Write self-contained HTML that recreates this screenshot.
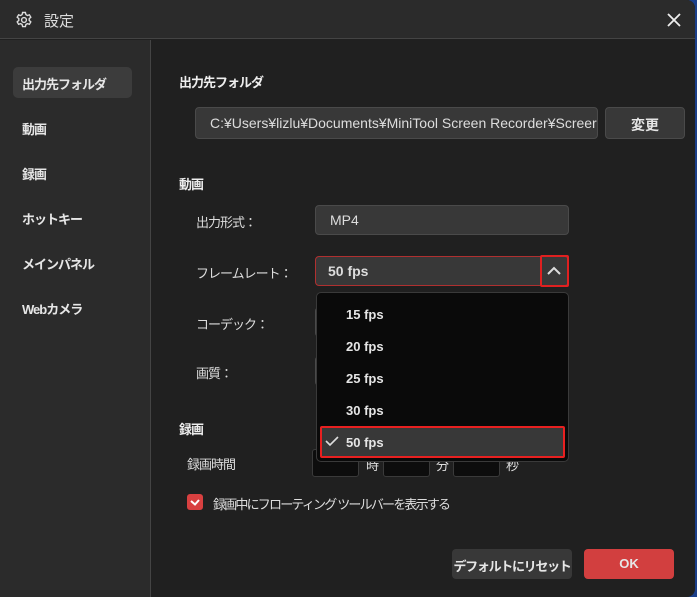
<!DOCTYPE html>
<html><head><meta charset="utf-8"><style>
*{margin:0;padding:0;box-sizing:border-box}
body{width:697px;height:597px;overflow:hidden;background:#1b3f8a;font-family:"Liberation Sans","Noto Sans CJK JP",sans-serif;color:#e6e6e6;position:relative}
.win{position:absolute;left:0;top:0;width:695px;height:597px;background:#202020;border-radius:0 8px 8px 0;overflow:hidden}
.title{position:absolute;left:0;top:0;width:100%;height:39px;background:#2b2b2b;border-bottom:1px solid #444}
.title .t{position:absolute;left:44px;top:10px;font-size:15px;color:#ddd}
.side{position:absolute;left:0;top:40px;width:151px;height:557px;background:#2b2b2b;border-right:1px solid #444}
.si{position:absolute;left:13px;width:119px;height:31px;font-size:13px;font-weight:bold;padding:7px 0 0 9px;color:#e6e6e6;letter-spacing:-1px}
.si.a{background:#3c3c3c;border-radius:5px}
.a1{position:absolute;font-size:13px;font-weight:bold;color:#eee;letter-spacing:-1px}
.l{position:absolute;font-size:13px;color:#ddd;letter-spacing:-1px;white-space:nowrap}
.box{position:absolute;background:#383838;border:1px solid #4a4a4a;border-radius:4px;font-size:14px;color:#ddd}
.btn{position:absolute;background:#383838;border-radius:4px;font-size:13px;font-weight:bold;color:#e6e6e6;text-align:center;white-space:nowrap}
.dd{position:absolute;left:316px;top:292px;width:253px;height:170px;background:#0a0a0a;border:1px solid #3a3a3a;border-radius:5px}
.op{position:absolute;left:29px;font-size:13px;font-weight:bold;color:#e6e6e6}
.tin{position:absolute;top:449px;height:28px;background:#0d0d0d;border:1px solid #3a3a3a;border-radius:3px}
</style></head><body>
<div class="win">
<div class="title">
<svg style="position:absolute;left:15px;top:11px" width="18" height="18" viewBox="0 0 18 18" fill="none" stroke="#ddd" stroke-width="1.4"><path d="M7.6 1.5h2.8l.5 2.1 1.5.9 2-.7 1.4 2.4-1.6 1.5v1.7l1.6 1.5-1.4 2.4-2-.7-1.5.9-.5 2.1H7.6l-.5-2.1-1.5-.9-2 .7-1.4-2.4 1.6-1.5V7.6L2.2 6.2l1.4-2.4 2 .7 1.5-.9z"/><circle cx="9" cy="9" r="2.4"/></svg>
<div class="t">設定</div>
<svg style="position:absolute;left:667px;top:13px" width="14" height="14" viewBox="0 0 14 14" stroke="#eee" stroke-width="1.8"><path d="M1 1L13 13M13 1L1 13"/></svg>
</div>
<div class="side">
<div class="si a" style="top:27px">出力先フォルダ</div>
<div class="si" style="top:72px">動画</div>
<div class="si" style="top:117px">録画</div>
<div class="si" style="top:162px">ホットキー</div>
<div class="si" style="top:207px">メインパネル</div>
<div class="si" style="top:252px">Webカメラ</div>
</div>
<div class="a1" style="left:179px;top:72px">出力先フォルダ</div>
<div class="box" style="left:195px;top:107px;width:403px;height:32px;padding:7px 0 0 14px;white-space:nowrap;overflow:hidden">C:¥Users¥lizlu¥Documents¥MiniTool Screen Recorder¥Screer</div>
<div class="btn" style="left:605px;top:107px;width:80px;height:32px;padding-top:7px;border:1px solid #4a4a4a;font-size:14px">変更</div>
<div class="a1" style="left:179px;top:174px">動画</div>
<div class="l" style="left:196px;top:212px">出力形式：</div>
<div class="box" style="left:315px;top:205px;width:254px;height:30px;padding:6px 0 0 14px">MP4</div>
<div class="l" style="left:196px;top:263px">フレームレート：</div>
<div class="box" style="left:315px;top:256px;width:254px;height:30px;padding:6px 0 0 12px;border-color:#b03030;font-weight:bold">50 fps</div>
<div style="position:absolute;left:540px;top:255px;width:29px;height:32px;border:2px solid #e02020;border-radius:2px"></div>
<svg style="position:absolute;left:546px;top:266px" width="16" height="10" viewBox="0 0 16 10" fill="none" stroke="#ddd" stroke-width="2"><path d="M2 8L8 2L14 8"/></svg>
<div class="l" style="left:196px;top:314px">コーデック：</div>
<div class="box" style="left:315px;top:307px;width:10px;height:30px"></div>
<div class="l" style="left:196px;top:363px">画質：</div>
<div class="box" style="left:315px;top:356px;width:10px;height:30px"></div>
<div class="a1" style="left:179px;top:419px">録画</div>
<div class="l" style="left:187px;top:454px">録画時間</div>
<div class="tin" style="left:312px;width:47px"></div>
<div class="l" style="left:366px;top:455px">時</div>
<div class="tin" style="left:383px;width:47px"></div>
<div class="l" style="left:436px;top:455px">分</div>
<div class="tin" style="left:453px;width:47px"></div>
<div class="l" style="left:506px;top:455px">秒</div>
<div class="dd">
<div class="op" style="top:14px">15 fps</div>
<div class="op" style="top:46px">20 fps</div>
<div class="op" style="top:78px">25 fps</div>
<div class="op" style="top:110px">30 fps</div>
<div style="position:absolute;left:3px;top:133px;width:245px;height:32px;background:#383838;border:2px solid #e82020;border-radius:2px"></div>
<svg style="position:absolute;left:8px;top:142px" width="14" height="12" viewBox="0 0 14 12" fill="none" stroke="#ddd" stroke-width="1.6"><path d="M1 6L5 10L13 2"/></svg>
<div class="op" style="top:142px">50 fps</div>
</div>
<div style="position:absolute;left:187px;top:494px;width:16px;height:16px;background:#d84040;border-radius:3px"></div>
<svg style="position:absolute;left:189px;top:497px" width="12" height="10" viewBox="0 0 12 10" fill="none" stroke="#fff" stroke-width="2"><path d="M2 4L6 7.5L10 3"/></svg>
<div class="l" style="left:213px;top:494px;letter-spacing:-1.8px">録画中にフローティング ツールバーを表示する</div>
<div class="btn" style="left:452px;top:549px;width:120px;height:30px;padding-top:7px;letter-spacing:-1.3px">デフォルトにリセット</div>
<div class="btn" style="left:584px;top:549px;width:90px;height:30px;padding-top:7px;background:#d23f3f">OK</div>
</div>
</body></html>
